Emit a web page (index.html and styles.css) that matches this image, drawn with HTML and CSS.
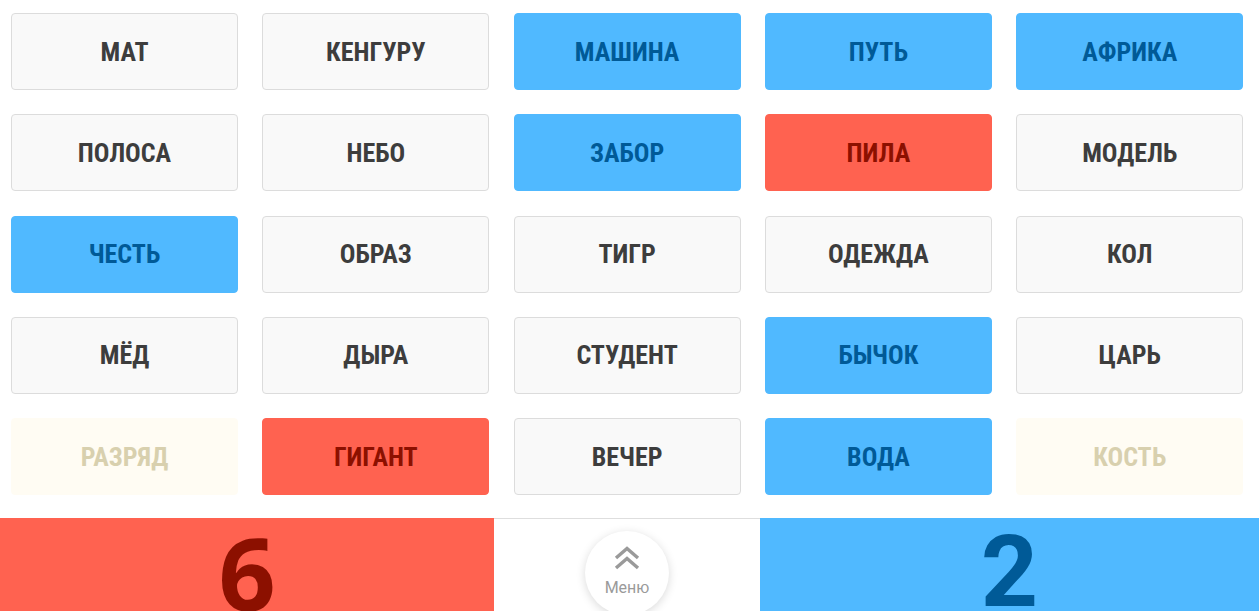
FILE: index.html
```html
<!DOCTYPE html>
<html lang="ru">
<head>
    <meta charset="UTF-8">
    <meta name="viewport" content="width=device-width, initial-scale=1.0">
    <title>Codenames</title>
    <link rel="stylesheet" href="styles.css">
</head>
<body>
    <!-- Word board -->
    <div class="board">
        <div class="card">МАТ</div>
        <div class="card">КЕНГУРУ</div>
        <div class="card blue">МАШИНА</div>
        <div class="card blue">ПУТЬ</div>
        <div class="card blue">АФРИКА</div>

        <div class="card">ПОЛОСА</div>
        <div class="card">НЕБО</div>
        <div class="card blue">ЗАБОР</div>
        <div class="card red">ПИЛА</div>
        <div class="card">МОДЕЛЬ</div>

        <div class="card blue">ЧЕСТЬ</div>
        <div class="card">ОБРАЗ</div>
        <div class="card">ТИГР</div>
        <div class="card">ОДЕЖДА</div>
        <div class="card">КОЛ</div>

        <div class="card">МЁД</div>
        <div class="card">ДЫРА</div>
        <div class="card">СТУДЕНТ</div>
        <div class="card blue">БЫЧОК</div>
        <div class="card">ЦАРЬ</div>

        <div class="card neutral">РАЗРЯД</div>
        <div class="card red">ГИГАНТ</div>
        <div class="card">ВЕЧЕР</div>
        <div class="card blue">ВОДА</div>
        <div class="card neutral">КОСТЬ</div>
    </div>

    <!-- Score bar -->
    <div class="score-bar">
        <div class="score score-red">6</div>
        <div class="menu-slot">
            <button class="menu-btn">
                <svg class="menu-icon" width="26" height="24" viewBox="0 0 26 24">
                    <path d="M2 12 L13 2.5 L24 12" fill="none" stroke="#9a9a9a" stroke-width="3.4"/>
                    <path d="M2 22 L13 12.5 L24 22" fill="none" stroke="#9a9a9a" stroke-width="3.4"/>
                </svg>
                <span class="menu-label">Меню</span>
            </button>
        </div>
        <div class="score score-blue">2</div>
    </div>
</body>
</html>
```

FILE: styles.css
```css
/* General styling */
body {
    margin: 0;
    padding: 0;
    height: 611px;
    overflow: hidden;
    background-color: #ffffff;
    font-family: "Roboto Condensed", "Liberation Sans Narrow", Roboto, sans-serif;
}

/* Board */
.board {
    display: grid;
    grid-template-columns: repeat(5, 227px);
    grid-auto-rows: 77px;
    column-gap: 24.3px;
    row-gap: 24.3px;
    padding: 13px 0 0 11px;
}

.card {
    display: flex;
    align-items: center;
    justify-content: center;
    background-color: #f9f9f9;
    border: 1px solid #dcdcdc;
    border-radius: 4px;
    color: #3d3d3d;
    font-size: 26px;
    font-weight: bold;
}

.card.blue {
    background-color: #50b9ff;
    border-color: #50b9ff;
    color: #005a97;
}

.card.red {
    background-color: #ff6250;
    border-color: #ff6250;
    color: #8c1000;
}

.card.neutral {
    background-color: #fffcf3;
    border-color: #fffcf3;
    color: #d8d0ae;
}

/* Score bar */
.score-bar {
    display: flex;
    margin-top: 23px;
    height: 93px;
    border-top: 1px solid #dedede;
}

.score {
    display: flex;
    justify-content: center;
    align-items: flex-start;
    font-family: "Open Sans", Roboto, sans-serif;
    font-weight: bold;
    font-size: 100px;
    line-height: 100px;
    padding-top: 4px;
}

.score-red {
    width: 494px;
    background-color: #ff6250;
    color: #8c1000;
    margin-top: -1px;
}

.score-blue {
    flex: 1;
    background-color: #50b9ff;
    color: #005a97;
    margin-top: -1px;
    font-family: Roboto, sans-serif;
}

.menu-slot {
    width: 266px;
    display: flex;
    justify-content: center;
    padding-top: 12px;
}

.menu-btn {
    width: 84px;
    height: 84px;
    border: none;
    border-radius: 50%;
    background-color: #ffffff;
    box-shadow: 0 2px 10px rgba(0, 0, 0, 0.15);
    display: flex;
    flex-direction: column;
    align-items: center;
    padding: 15px 0 0;
    cursor: pointer;
}

.menu-label {
    margin-top: 8px;
    font-family: Roboto, sans-serif;
    font-size: 16px;
    color: #9a9a9a;
}
```
